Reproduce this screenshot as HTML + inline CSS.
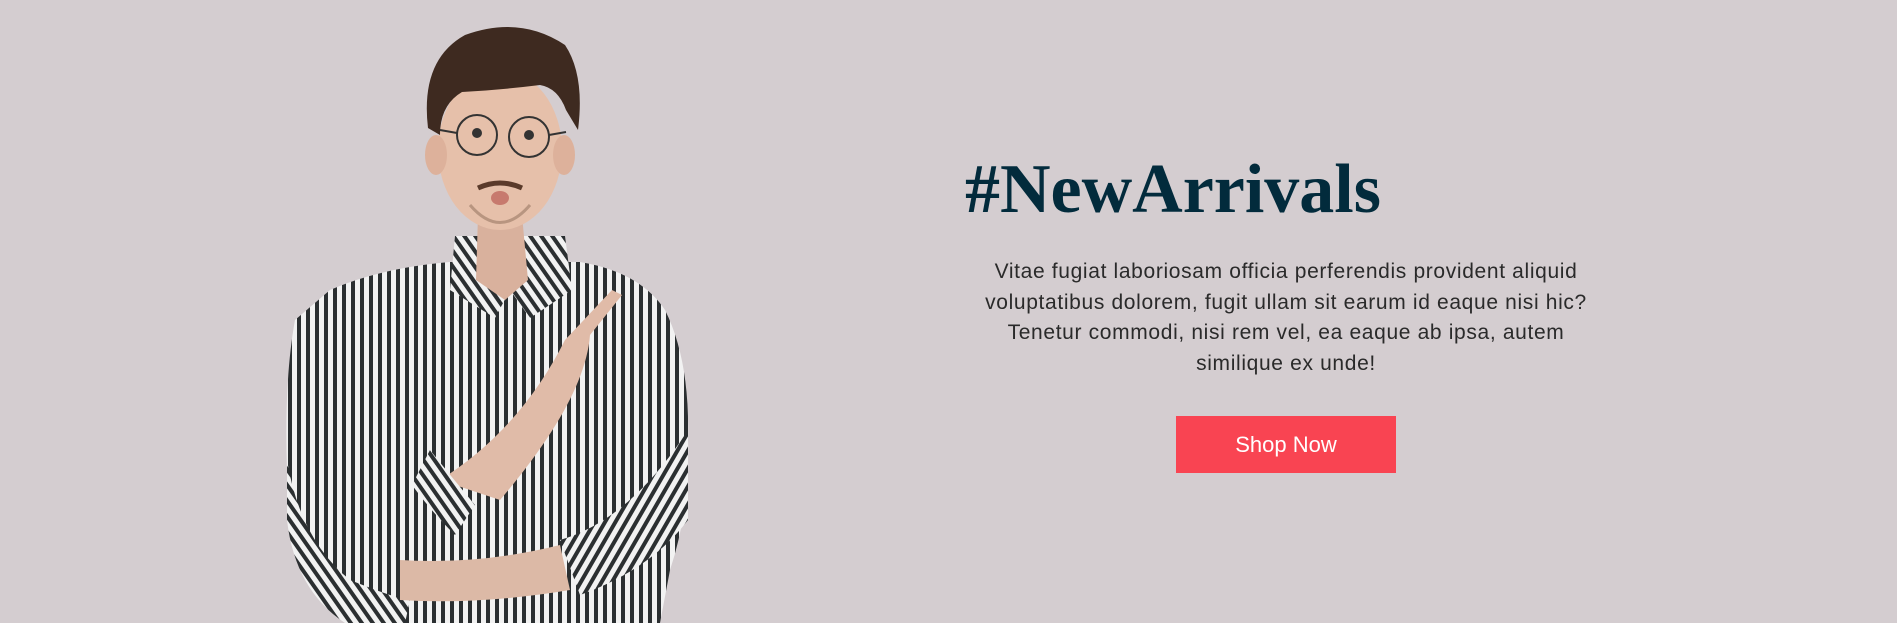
<!DOCTYPE html>
<html><head><style>
html,body{margin:0;padding:0}
body{width:1897px;height:623px;background:#d4cdd0;position:relative;overflow:hidden;font-family:"Liberation Sans",sans-serif}
h1{position:absolute;left:965px;top:150px;margin:0;font-family:"Liberation Serif",serif;font-weight:bold;font-size:70px;line-height:80px;color:#022b3c}
p{position:absolute;left:976px;width:620px;top:257px;margin:0;text-align:center;font-size:21px;line-height:30.5px;color:#2a2a2a;letter-spacing:0.65px}
.btn{position:absolute;left:1176px;top:416px;width:220px;height:57px;background:#f94452;color:#fff;font-size:22px;line-height:57px;text-align:center}
svg{position:absolute;left:0;top:0}
</style></head><body>
<svg width="900" height="623" viewBox="0 0 900 623">
<defs>
<pattern id="st" width="9" height="10" patternUnits="userSpaceOnUse"><rect width="9" height="10" fill="#f2f2f2"/><rect width="4" height="10" fill="#2b2f31"/></pattern>
<pattern id="st2" width="9" height="10" patternUnits="userSpaceOnUse" patternTransform="rotate(-35)"><rect width="9" height="10" fill="#f2f2f2"/><rect width="4" height="10" fill="#2b2f31"/></pattern>
<pattern id="st3" width="9" height="10" patternUnits="userSpaceOnUse" patternTransform="rotate(30)"><rect width="9" height="10" fill="#f2f2f2"/><rect width="4" height="10" fill="#2b2f31"/></pattern>
</defs>
<path d="M330 290 Q380 268 450 262 L580 262 Q640 272 665 310 Q690 360 688 440 Q690 510 670 570 L660 623 L350 623 L330 600 Q290 540 287 470 Q284 380 295 320 Z" fill="url(#st)"/>
<path d="M287 460 Q300 540 350 580 Q400 600 410 600 L405 623 L345 623 Q295 590 287 520 Z" fill="url(#st2)"/>
<path d="M560 540 Q630 520 688 430 L688 520 Q650 570 580 595 Z" fill="url(#st3)"/>
<path d="M400 560 Q480 565 560 545 L570 590 Q480 605 400 600 Z" fill="#dcb9a6"/>
<path d="M440 480 Q520 430 565 340 L612 290 L622 295 L590 335 Q585 400 500 500 Z" fill="#e0bba8"/>
<path d="M430 450 Q450 475 475 505 L455 535 Q430 510 412 485 Z" fill="url(#st2)"/>
<path d="M455 236 L450 290 L495 318 L510 290 L530 318 L572 290 L565 236 Z" fill="url(#st2)"/>
<path d="M478 215 L522 215 L528 280 L505 300 L476 280 Z" fill="#d9b19d"/>
<ellipse cx="500" cy="150" rx="62" ry="80" fill="#e6c0aa"/>
<ellipse cx="436" cy="155" rx="11" ry="20" fill="#ddb19b"/>
<ellipse cx="564" cy="155" rx="11" ry="20" fill="#ddb19b"/>
<path d="M428 128 Q420 60 465 35 Q520 15 565 45 Q585 75 578 130 L566 110 Q558 88 540 85 Q500 90 462 92 Q440 105 440 135 Z" fill="#3e2a20"/>
<circle cx="477" cy="135" r="20" fill="none" stroke="#333" stroke-width="2"/>
<circle cx="529" cy="137" r="20" fill="none" stroke="#333" stroke-width="2"/>
<circle cx="477" cy="133" r="5" fill="#333"/><circle cx="529" cy="135" r="5" fill="#333"/>
<path d="M457 133 L440 130 M549 135 L566 132" stroke="#333" stroke-width="2"/>
<path d="M478 188 Q500 178 522 188" stroke="#5a3a2a" stroke-width="5" fill="none"/>
<ellipse cx="500" cy="198" rx="9" ry="7" fill="#c77a6e"/>
<path d="M470 205 Q500 240 530 205" stroke="#8a6a55" stroke-width="3" fill="none" opacity="0.5"/>
</svg>
<h1>#NewArrivals</h1>
<p>Vitae fugiat laboriosam officia perferendis provident aliquid voluptatibus dolorem, fugit ullam sit earum id eaque nisi hic? Tenetur commodi, nisi rem vel, ea eaque ab ipsa, autem similique ex unde!</p>
<div class="btn">Shop Now</div>
</body></html>
